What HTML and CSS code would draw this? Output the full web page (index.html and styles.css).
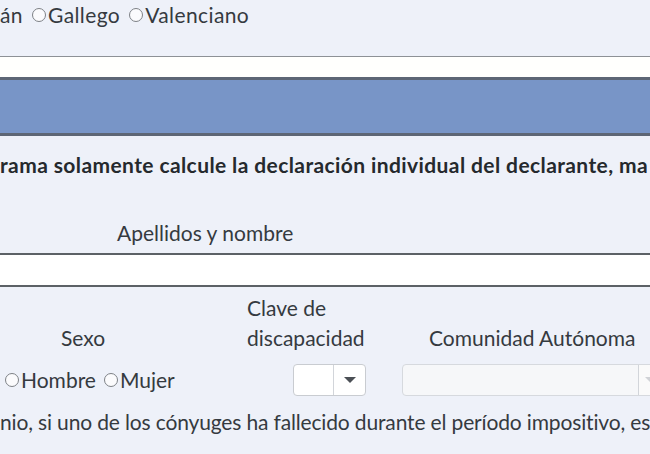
FILE: index.html
```html
<!DOCTYPE html>
<html lang="es">
<head>
<meta charset="utf-8">
<link rel="stylesheet" href="styles.css">
<title>Datos personales</title>
</head>
<body>
<div class="page">
  <div class="lang-row">
    <span class="txt">án</span>
    <label class="radio"><span class="circle"></span>Gallego</label>
    <label class="radio"><span class="circle"></span>Valenciano</label>
  </div>

  <div class="input-bar"></div>

  <div class="band"></div>

  <p class="notice">rama solamente calcule la declaración individual del declarante, ma</p>

  <div class="name-head"><span class="name-label">Apellidos y nombre</span></div>

  <div class="name-input"></div>

  <div class="data-grid">
    <div class="lbl lbl-sexo">Sexo</div>
    <div class="lbl lbl-clave">Clave de<br>discapacidad</div>
    <div class="lbl lbl-ca">Comunidad Autónoma</div>

    <div class="ctl ctl-sexo">
      <label class="radio"><span class="circle"></span>Hombre</label>
      <label class="radio"><span class="circle"></span>Mujer</label>
    </div>
    <div class="ctl ctl-clave">
      <div class="select select-sm">
        <span class="select-value"></span>
        <span class="select-btn"><span class="caret"></span></span>
      </div>
    </div>
    <div class="ctl ctl-ca">
      <div class="select select-lg">
        <span class="select-value"></span>
        <span class="select-btn"><span class="caret caret-faint"></span></span>
      </div>
    </div>
  </div>

  <p class="footnote">nio, si uno de los cónyuges ha fallecido durante el período impositivo, es</p>
</div>
</body>
</html>
```

FILE: styles.css
```css
* { box-sizing: border-box; }

html, body {
  margin: 0;
  padding: 0;
  background: #eef1f9;
  overflow: hidden;
}

body {
  font-family: Lato, "Open Sans", sans-serif;
  font-size: 21px;
  color: #353a40;
  width: 650px;
  height: 454px;
}

.page {
  width: 650px;
  overflow: hidden;
}

.lang-row {
  height: 30px;
  line-height: 30px;
  white-space: nowrap;
  display: flex;
  align-items: center;
  gap: 4px;
  letter-spacing: 0.4px;
}

.radio {
  display: inline-flex;
  align-items: center;
  white-space: nowrap;
  flex-shrink: 0;
}

.circle {
  display: inline-block;
  flex-shrink: 0;
  width: 14px;
  height: 14px;
  border: 1px solid #7d8186;
  border-radius: 50%;
  background: #fbfbfd;
  margin: 0 2px 0 5px;
}

.input-bar {
  margin-top: 26px;
  height: 21px;
  background: #fffffd;
  border-top: 1px solid #8d9196;
}

.band {
  height: 59px;
  background: #7895c7;
  border-top: 3px solid #5d6675;
  border-bottom: 3px solid #5d6675;
}

.notice {
  margin: 14px 0 0;
  line-height: 30px;
  font-weight: bold;
  white-space: nowrap;
  letter-spacing: 0.4px;
  color: #25292d;
}

.name-head {
  margin-top: 38px;
  line-height: 30px;
  padding-left: 117px;
}

.name-input {
  margin-top: 5px;
  height: 34px;
  background: #fff;
  border-top: 2px solid #5c6166;
  border-bottom: 2px solid #5c6166;
}

.data-grid {
  display: grid;
  grid-template-columns: 247px 155px 248px;
  grid-template-rows: auto auto;
  align-items: end;
  margin-top: 6px;
  line-height: 30px;
}

.lbl-sexo { text-align: center; width: 166px; }
.lbl-clave { text-align: left; white-space: nowrap; }
.lbl-ca { padding-left: 27px; white-space: nowrap; }

.ctl {
  margin-top: 11px;
  height: 32px;
  display: flex;
  align-items: center;
}

.ctl-sexo {
  gap: 3px;
}

.ctl-clave { padding-left: 46px; }

.select {
  display: flex;
  height: 32px;
  border: 1px solid #c9ccd1;
  border-radius: 4px;
  background: #fff;
  overflow: hidden;
}

.select-sm { width: 73px; }
.select-lg {
  width: 262px;
  flex-shrink: 0;
  background: #f6f7f9;
  border-color: #d6d9de;
}

.select-value { flex: 1; }

.select-btn {
  width: 32px;
  border-left: 1px solid #d2d5da;
  display: flex;
  align-items: center;
  justify-content: center;
}

.select-lg .select-btn { width: 25px; background: #fafafa; }

.caret {
  width: 0;
  height: 0;
  border-left: 6px solid transparent;
  border-right: 6px solid transparent;
  border-top: 6px solid #4b4f55;
}

.caret-faint { border-top-color: #d0d2d6; }

.footnote {
  margin: 11px 0 0;
  line-height: 30px;
  white-space: nowrap;
  letter-spacing: -0.15px;
}
```
